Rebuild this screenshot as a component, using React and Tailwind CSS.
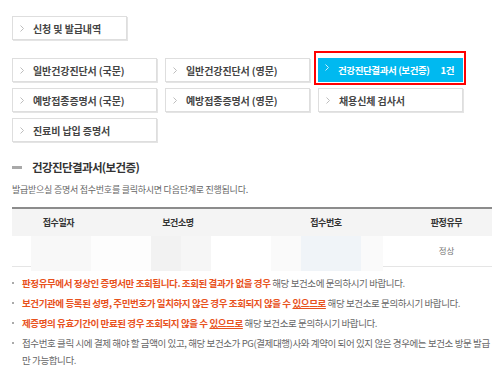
import React from 'react';

const Chevron = ({ className }) => (
  <svg width="4" height="7" viewBox="0 0 4 7" className={className}>
    <path d="M0.5 0.5 L3.5 3.5 L0.5 6.5" fill="none" stroke="currentColor" strokeWidth="1" />
  </svg>
);

function DocButton({ label, active, count, className = '' }) {
  if (active) {
    return (
      <div className={`relative ${className}`}>
        <button
          type="button"
          className="flex h-6 w-full items-center bg-[#00b9f0] pl-[7px] text-left text-[9.5px] font-bold tracking-[-0.4px] text-white"
        >
          <Chevron className="mr-[9px] -mt-[5px] text-[#cfeffc]" />
          <span>{label}</span>
          <span className="ml-[11px]">{count}</span>
        </button>
        <span className="pointer-events-none absolute -left-[4px] -right-[3px] -top-[7px] -bottom-[3px] border-2 border-[#ff0000]" />
      </div>
    );
  }
  return (
    <button
      type="button"
      className={`flex h-6 items-center border border-[#dedede] bg-white pl-[7px] text-left text-[10px] font-bold tracking-[-0.1px] text-[#444] shadow-[1px_1px_0_#e4e4e4] ${className}`}
    >
      <Chevron className="mr-[9px] text-[#bdbdbd]" />
      <span>{label}</span>
    </button>
  );
}

const redaction = [
  ['w-[60px]', 'bg-[#f8f8f8]'],
  ['w-[60px]', 'bg-[#fdfdfd]'],
  ['w-[30px]', 'bg-[#f2f2f2]'],
  ['w-[30px]', 'bg-[#f6f6f6]'],
  ['w-[60px]', 'bg-[#ffffff]'],
  ['w-[30px]', 'bg-[#fafafa]'],
  ['w-[60px]', 'bg-[#f0f4f8]'],
  ['w-[22px]', 'bg-[#fafafa]'],
];

export default function App() {
  return (
    <div className="min-h-[375px] bg-white pl-3 pr-2 pt-4 font-['Noto_Sans_CJK_KR','Noto_Sans',sans-serif] text-[#333]">
      <DocButton label="신청 및 발급내역" className="w-[115px]" />

      <div className="mt-[18px] grid w-[451px] grid-cols-3 gap-x-2 gap-y-[6px]">
        <DocButton label="일반건강진단서 (국문)" />
        <DocButton label="일반건강진단서 (영문)" />
        <DocButton label="건강진단결과서 (보건증)" count="1건" active />
        <DocButton label="예방접종증명서 (국문)" />
        <DocButton label="예방접종증명서 (영문)" />
        <DocButton label="채용신체 검사서" />
        <DocButton label="진료비 납입 증명서" />
      </div>

      <div className="mt-[17px] flex items-center">
        <span className="h-[3px] w-[10px] bg-[#a9a9a9]" />
        <h3 className="ml-[10px] text-[11.5px] font-bold tracking-[-0.6px] text-[#333]">건강진단결과서(보건증)</h3>
      </div>
      <p className="mt-[7px] text-[9px] tracking-[-0.25px] text-[#666]">
        발급받으실 증명서 접수번호를 클릭하시면 다음단계로 진행됩니다.
      </p>

      <div className="mt-[10px] w-[480px] border-t-2 border-[#8c8c8c]">
        <div className="grid h-[27px] grid-cols-[93px_146px_150px_1fr] items-center bg-[#f4f4f4] text-center text-[9px] font-bold tracking-[-0.4px] text-[#333]">
          <span>접수일자</span>
          <span>보건소명</span>
          <span>접수번호</span>
          <span>판정유무</span>
        </div>
        <div className="relative grid h-[31px] grid-cols-[93px_146px_150px_1fr] items-center border-b border-[#e5e5e5] text-center text-[8.5px] text-[#777]">
          <span />
          <span />
          <span />
          <span>정상</span>
          <div className="absolute left-[19px] top-0 flex h-[35px]">
            {redaction.map(([w, bg], i) => (
              <div key={i} className={`${w} ${bg} h-full`} />
            ))}
          </div>
        </div>
      </div>

      <ul className="mt-[8px] w-[478px] text-[9.5px] leading-[17px] tracking-[-0.4px] text-[#666]">
        <li className="flex">
          <span className="mr-[8px] mt-[7px] h-[2px] w-[2px] shrink-0 bg-[#aaa]" />
          <p>
            <b className="text-[#e8521d]">판정유무에서 정상인 증명서만 조회됩니다. 조회된 결과가 없을 경우</b> 해당 보건소에 문의하시기 바랍니다.
          </p>
        </li>
        <li className="mt-[3px] flex">
          <span className="mr-[8px] mt-[7px] h-[2px] w-[2px] shrink-0 bg-[#aaa]" />
          <p>
            <b className="text-[#e8521d]">
              보건기관에 등록된 성명, 주민번호가 일치하지 않은 경우 조회되지 않을 수 <u>있으므로</u>
            </b>{' '}
            해당 보건소로 문의하시기 바랍니다.
          </p>
        </li>
        <li className="mt-[3px] flex">
          <span className="mr-[8px] mt-[7px] h-[2px] w-[2px] shrink-0 bg-[#aaa]" />
          <p>
            <b className="text-[#e8521d]">
              제증명의 유효기간이 만료된 경우 조회되지 않을 수 <u>있으므로</u>
            </b>{' '}
            해당 보건소로 문의하시기 바랍니다.
          </p>
        </li>
        <li className="mt-[3px] flex">
          <span className="mr-[8px] mt-[7px] h-[2px] w-[2px] shrink-0 bg-[#aaa]" />
          <p>
            접수번호 클릭 시에 결제 해야 할 금액이 있고, 해당 보건소가 PG(결제대행)사와 계약이 되어 있지 않은 경우에는 보건소 방문 발급만 가능합니다.
          </p>
        </li>
      </ul>
    </div>
  );
}
